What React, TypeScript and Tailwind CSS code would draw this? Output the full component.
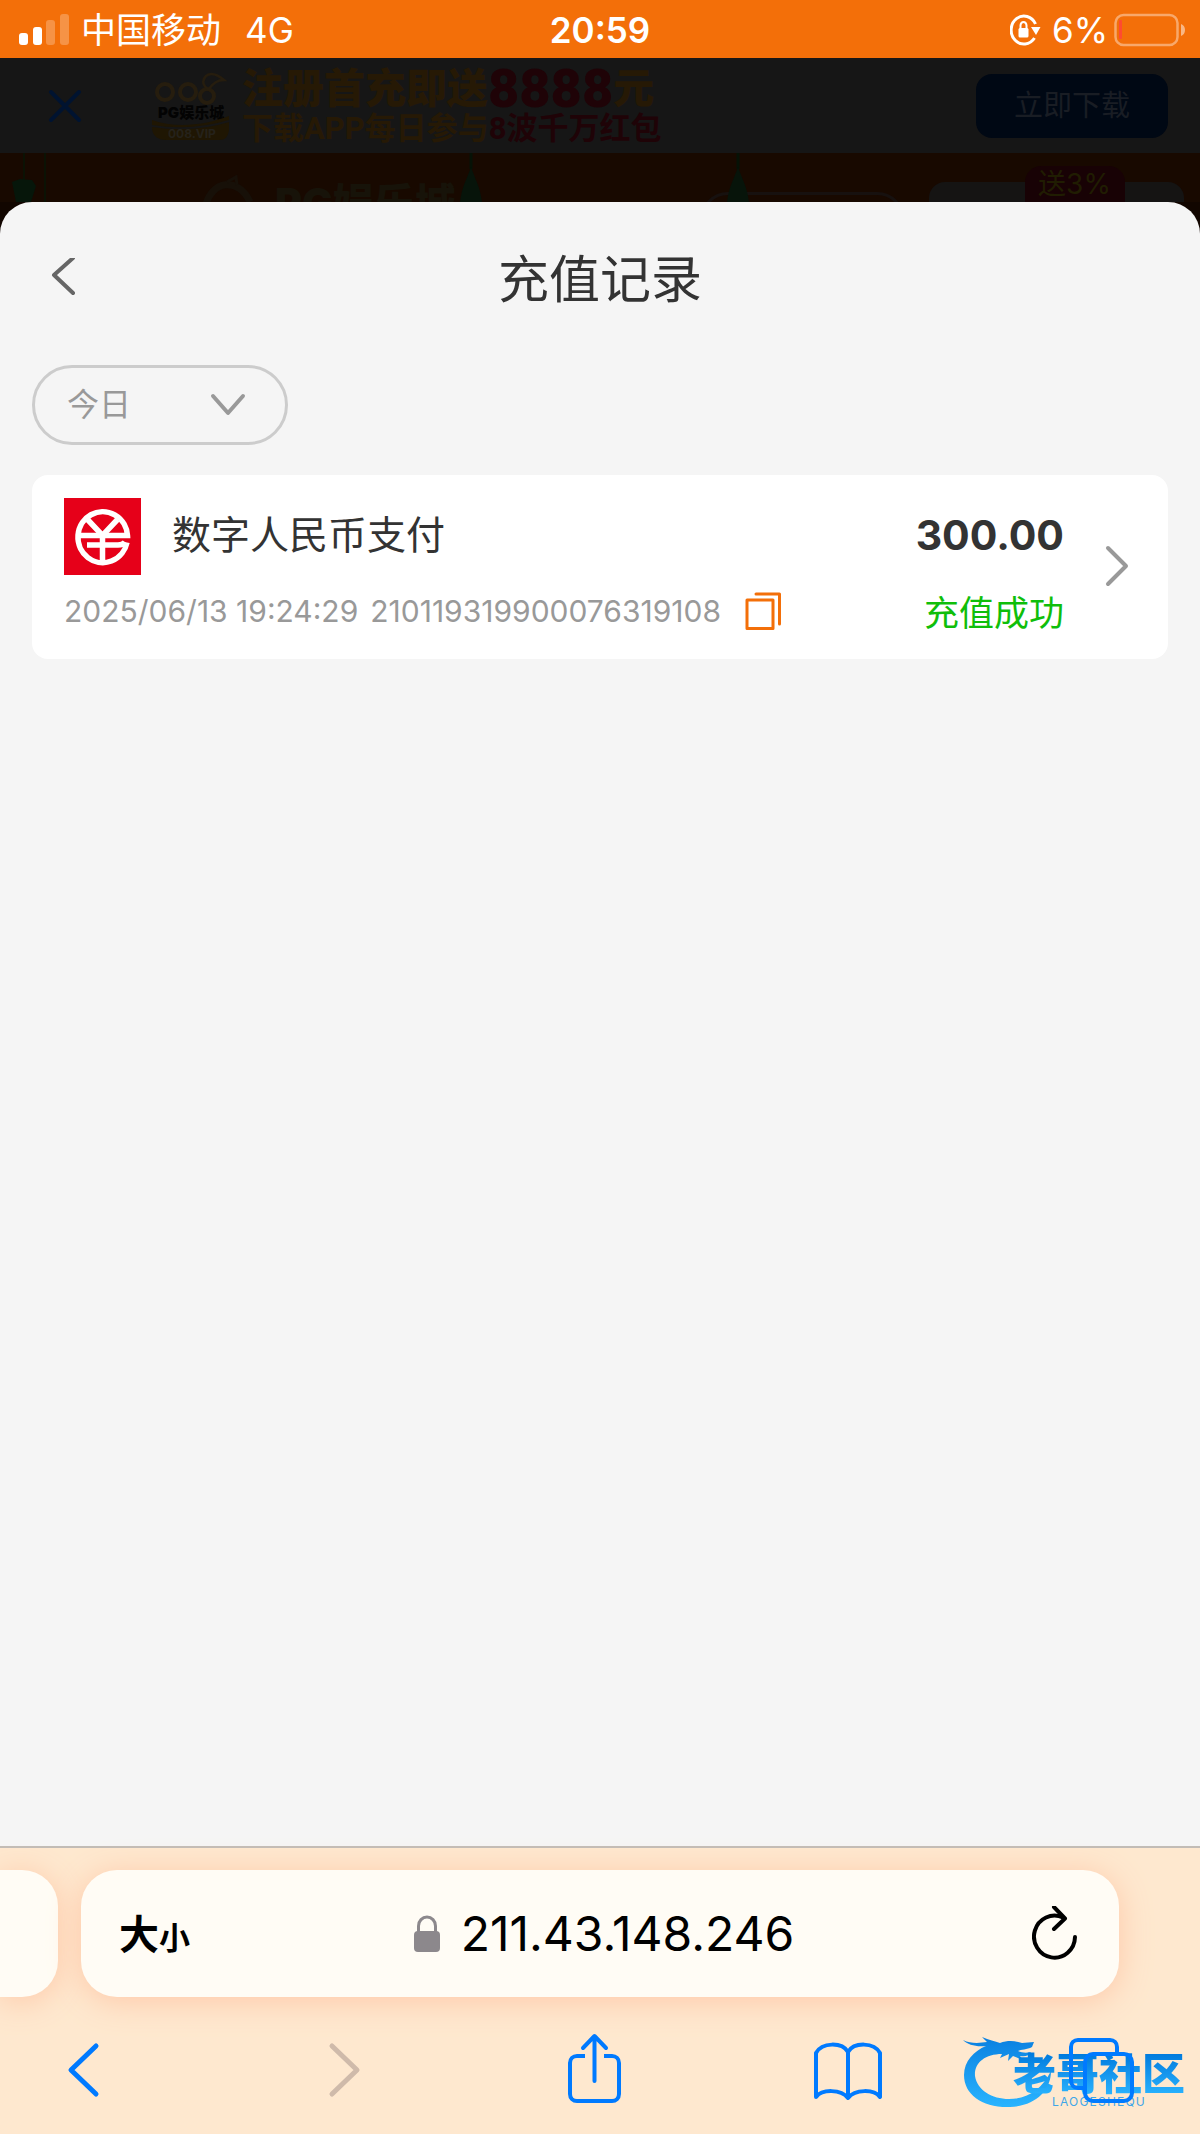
import { useState } from 'react';

type TransactionRecord = {
  id: string;
  method: string;
  time: string;
  amount: string;
  status: string;
};

const RECORDS: TransactionRecord[] = [
  {
    id: '210119319900076319108',
    method: '数字人民币支付',
    time: '2025/06/13 19:24:29',
    amount: '300.00',
    status: '充值成功',
  },
];

function StatusBar() {
  return (
    <header className="grid h-[58px] grid-cols-[1fr_auto_1fr] items-center bg-[#f36f09] px-[14px] pt-[2px] text-[35px] leading-[40px] text-white">
      <div className="flex items-center gap-3 pl-[5px]">
        <svg width="50" height="32" viewBox="0 0 50 32" fill="#fff" aria-hidden="true">
          <rect x="0" y="19" width="9" height="12" rx="3" />
          <rect x="14" y="13" width="9" height="18" rx="3" />
          <rect x="27" y="6" width="9" height="25" rx="3" opacity=".25" />
          <rect x="41" y="0" width="9" height="31" rx="3" opacity=".25" />
        </svg>
        <span>中国移动</span>
        <span className="pl-3">4G</span>
      </div>
      <time className="font-semibold">20:59</time>
      <div className="flex items-center justify-end gap-[6px]">
        <svg width="32" height="32" viewBox="0 0 32 32" fill="none" aria-hidden="true">
          <path d="M24.500 24A12.800 14 0 1 1 25.500 10" stroke="#fff" strokeWidth="3" />
          <path d="M21 13h9.500l-4.500 8z" fill="#fff" />
          <rect x="8.500" y="14" width="10" height="9.500" rx="1.500" fill="#fff" />
          <path d="M10.500 15v-3.500a3 3.500 0 0 1 6 0V15" stroke="#fff" strokeWidth="2" />
        </svg>
        <span className="pl-1">6%</span>
        <svg width="72" height="34" viewBox="0 0 72 34" fill="none" aria-hidden="true">
          <rect x="1.500" y="2" width="62" height="30" rx="8" stroke="#fff" strokeOpacity=".4" strokeWidth="2.500" />
          <rect x="5" y="7" width="3" height="19" rx="1" fill="#ff4b30" />
          <path d="M67 11q4 1.500 4 6t-4 6z" fill="#fff" fillOpacity=".5" />
        </svg>
      </div>
    </header>
  );
}

function BrandLogo() {
  return (
    <svg width="78" height="72" viewBox="0 0 78 72" fill="none" aria-hidden="true">
      <g stroke="#261d0e" strokeWidth="4">
        <circle cx="13" cy="22" r="8" />
        <circle cx="36" cy="22" r="8" />
        <circle cx="55" cy="26" r="7" />
        <path d="M59 21c-8-4-10-10-5-15 5-4 12-1 18 4-5 0-11 3-15 9" strokeWidth="2.500" />
      </g>
      <text x="6" y="48" fontSize="15" fontWeight="900" fill="#030303">PG娱乐城</text>
      <path d="M0 50c22 8 51 6 77-4v14c-1 7-4 10-10 10H14C6 70 1 66 0 59z" fill="#1f1603" />
      <path d="M0 56c26 4 51 3 77-5" stroke="#161616" strokeWidth="2" />
      <text x="16" y="68" fontSize="12" fontWeight="700" fill="#25221b">008.VIP</text>
    </svg>
  );
}

function DownloadBanner() {
  return (
    <section className="flex h-[95px] items-center justify-between bg-[#161616] pr-8 pl-12">
      <div className="flex items-center">
        <button type="button" aria-label="关闭" className="mr-[70px]">
          <svg width="34" height="36" viewBox="0 0 34 36" aria-hidden="true">
            <path d="M3 4l28 28M31 4L3 32" stroke="#001330" strokeWidth="4" strokeLinecap="round" />
          </svg>
        </button>
        <BrandLogo />
        <div className="ml-3 font-[Roboto,'Noto_Sans_CJK_SC',sans-serif] font-black whitespace-nowrap text-[#261905]">
          <p className="flex items-center text-[41px] leading-[46px]">
            注册首充即送<span className="text-[54px] text-[#1f0307]">8888</span>元
          </p>
          <p className="text-[31px] leading-[34px] font-bold">
            下载APP每日参与<span className="text-[#1f0307]">8波千万红包</span>
          </p>
        </div>
      </div>
      <button type="button" className="h-16 w-48 rounded-2xl bg-[#000814] text-[29px] leading-[40px] text-[#191d24]">
        立即下载
      </button>
    </section>
  );
}

function Tassel() {
  return (
    <svg width="30" height="49" viewBox="0 0 30 49" aria-hidden="true">
      <path d="M15 0v16" stroke="#061206" strokeWidth="3" />
      <path d="M15 14C11 26 6 33 4 49h22C24 33 19 26 15 14z" fill="#07140a" />
    </svg>
  );
}

// Top edge of the casino lobby that peeks out above the sheet
function LobbyStrip() {
  return (
    <section className="flex h-[49px] items-start justify-between overflow-hidden bg-[#180900] pr-4 pl-[9px]">
      <div className="flex items-start">
        <svg width="38" height="49" viewBox="0 0 38 49" aria-hidden="true">
          <path d="M15 0v28M36 0v49" stroke="#0b1204" strokeWidth="2" />
          <path d="M3 29l8-3 12 1 4 6-5 16H7z" fill="#06160a" />
        </svg>
        <svg width="60" height="49" viewBox="0 0 60 49" className="ml-[152px]" fill="none" aria-hidden="true">
          <path d="M6 55C12 26 40 24 51 49" stroke="#171008" strokeWidth="7" />
          <path d="M28 29l9-5 1 8" stroke="#171008" strokeWidth="3" />
        </svg>
        <span className="ml-4 pt-6 text-[41px] leading-[52px] font-black text-[#171309]">PG娱乐城</span>
        <Tassel />
      </div>
      <div className="flex items-start gap-6">
        <div className="relative mt-[39px] h-14 w-[205px] rounded-full border-3 border-[#17110f]">
          <div className="absolute -top-[42px] left-5">
            <Tassel />
          </div>
        </div>
        <div className="mt-[29px] flex h-14 w-[255px] justify-center rounded-2xl bg-[#151413] pl-9">
          <span className="-mt-4 h-14 w-[100px] rounded-t-2xl bg-[#180205] text-center text-[28px] leading-[36px] text-[#201d02]">
            送3%
          </span>
        </div>
      </div>
    </section>
  );
}

function YuanLogo() {
  return (
    <svg width="77" height="77" viewBox="0 0 77 77" fill="none" aria-hidden="true">
      <rect width="77" height="77" fill="#e60019" />
      <g stroke="#fff" strokeWidth="5.500">
        <path d="M63 44.500A24.800 25.500 0 1 1 63.500 37.500H14" />
        <path d="M23.500 21.500L38.500 37.500L53.500 21.500M38.500 36v29" />
        <path d="M23 47h31M54 47q5 0 7-3" />
      </g>
    </svg>
  );
}

function RecordCard({ record }: { record: TransactionRecord }) {
  return (
    <li className="flex h-[184px] items-center justify-between rounded-2xl bg-white pr-[38px] pb-[2px] pl-8">
      <div className="flex flex-col gap-3">
        <div className="flex items-center gap-[31px]">
          <YuanLogo />
          <h2 className="pb-[2px] text-[39px] leading-[48px] text-[#333]">{record.method}</h2>
        </div>
        <div className="flex items-center text-[30px] leading-[48px] whitespace-nowrap text-[#999]">
          <time>{record.time}</time>
          <span className="ml-3">{record.id}</span>
          <button type="button" aria-label="复制订单号" className="ml-6">
            <svg width="36" height="38" viewBox="0 0 36 38" fill="none" stroke="#f36f09" strokeWidth="3" strokeLinejoin="round" aria-hidden="true">
              <rect x="2" y="8" width="26" height="28.500" />
              <path d="M11 2h23.500v30" strokeLinecap="round" />
            </svg>
          </button>
        </div>
      </div>
      <div className="flex items-center gap-10">
        <div className="flex flex-col items-end gap-[22px] pt-4">
          <strong className="text-[41px] leading-[56px] font-bold text-[#333]">{record.amount}</strong>
          <span className="text-[35px] leading-[56px] text-[#0fbe0a]">{record.status}</span>
        </div>
        <svg width="26" height="44" viewBox="0 0 26 44" fill="none" aria-hidden="true">
          <path d="M4 4l18 18L4 40" stroke="#999" strokeWidth="4" strokeLinecap="round" strokeLinejoin="round" />
        </svg>
      </div>
    </li>
  );
}

function RecordSheet() {
  const [range, setRange] = useState('今日');

  return (
    <main className="flex-1 rounded-t-[32px] bg-[#f5f5f5] px-8">
      <div className="grid h-[155px] grid-cols-[1fr_auto_1fr] items-center">
        <button type="button" aria-label="返回" className="justify-self-start pl-[18px]">
          <svg width="28" height="44" viewBox="0 0 28 44" fill="none" aria-hidden="true">
            <path d="M23 0L4 17l19 18" stroke="#666" strokeWidth="4" strokeLinecap="round" strokeLinejoin="round" />
          </svg>
        </button>
        <h1 className="text-[51px] leading-[64px] text-[#333]">充值记录</h1>
      </div>

      <div className="relative mt-2 w-64">
        <label htmlFor="range" className="sr-only">日期范围</label>
        <select
          id="range"
          value={range}
          onChange={(e) => setRange(e.target.value)}
          className="block h-20 w-full appearance-none rounded-full border-3 border-[#ccc] bg-transparent pl-8 text-[32px] leading-[40px] text-[#999]"
        >
          <option>今日</option>
          <option>昨日</option>
          <option>近7日</option>
          <option>近30日</option>
        </select>
        <svg width="36" height="24" viewBox="0 0 36 24" fill="none" className="pointer-events-none absolute top-7 right-[42px]" aria-hidden="true">
          <path d="M3 3l15 17L33 3" stroke="#999" strokeWidth="4" strokeLinecap="round" strokeLinejoin="round" />
        </svg>
      </div>

      <ul className="mt-[30px] space-y-4">
        {RECORDS.map((r) => (
          <RecordCard key={r.id} record={r} />
        ))}
      </ul>
    </main>
  );
}

function AddressBar() {
  return (
    <div className="flex h-[127px] gap-[23px] pr-[81px]">
      <div className="w-[58px] rounded-r-[36px] bg-[#fffcf5] shadow-[0_4px_32px_#ffc8a8]" />
      <div className="grid flex-1 grid-cols-[1fr_auto_1fr] items-center rounded-[36px] bg-[#fffcf5] pr-[41px] pl-[38px] shadow-[0_4px_32px_#ffc8a8]">
        <button type="button" aria-label="页面设置" className="flex items-baseline justify-self-start pt-[6px] font-bold text-black">
          <span className="text-[40px] leading-[56px]">大</span>
          <span className="text-[31px] leading-[56px]">小</span>
        </button>
        <div className="flex items-center gap-5 pl-[10px]">
          <svg width="28" height="38" viewBox="0 0 28 38" fill="none" aria-hidden="true">
            <rect x="1" y="16" width="26" height="21" rx="4" fill="#8c888c" />
            <path d="M5.500 18v-7a8.500 9 0 0 1 17 0v7" stroke="#8c888c" strokeWidth="3" />
          </svg>
          <label htmlFor="address" className="sr-only">网址</label>
          <input
            id="address"
            type="text"
            defaultValue="211.43.148.246"
            className="field-sizing-content bg-transparent text-[48px] leading-[64px] text-black"
          />
        </div>
        <button type="button" aria-label="重新载入" className="justify-self-end">
          <svg width="46" height="56" viewBox="0 0 46 56" fill="none" stroke="#000" strokeWidth="4" strokeLinecap="round" strokeLinejoin="round" aria-hidden="true">
            <path d="M43 31a20.500 21 0 1 1-12-19.500" />
            <path d="M22 1l11 11.500L22 23" />
          </svg>
        </button>
      </div>
    </div>
  );
}

function Toolbar() {
  return (
    <nav className="flex h-[137px] items-center justify-between pt-1 pr-[63px] pl-12">
      <button type="button" aria-label="后退">
        <svg width="72" height="72" viewBox="0 0 72 72" fill="none" aria-hidden="true">
          <path d="M48 14L23 38l25 24" stroke="#007aff" strokeWidth="5" strokeLinecap="round" strokeLinejoin="round" />
        </svg>
      </button>
      <button type="button" aria-label="前进" disabled>
        <svg width="72" height="72" viewBox="0 0 72 72" fill="none" aria-hidden="true">
          <path d="M30 14l25 24-25 24" stroke="#cfbaaa" strokeWidth="5" strokeLinecap="round" strokeLinejoin="round" />
        </svg>
      </button>
      <button type="button" aria-label="分享">
        <svg width="72" height="72" viewBox="0 0 72 72" fill="none" stroke="#007aff" strokeWidth="4" aria-hidden="true">
          <path d="M28 24h-8c-4 0-7 3-7 7v31c0 4 3 7 7 7h35c4 0 7-3 7-7V31c0-4-3-7-7-7h-8" />
          <path d="M37.500 49V5M26 16L37.500 4 49 16" strokeLinecap="round" strokeLinejoin="round" />
        </svg>
      </button>
      <button type="button" aria-label="书签">
        <svg width="72" height="72" viewBox="0 0 72 72" fill="none" stroke="#007aff" strokeWidth="4" strokeLinejoin="round" aria-hidden="true">
          <path d="M37 20c-6-10-26-10-32 1v44c6-8 25-8 32 1 7-9 26-9 32-1V21c-6-11-26-11-32-1z" />
          <path d="M37 20v46" />
        </svg>
      </button>
      <div className="relative">
        <Watermark />
        <button type="button" aria-label="标签页" className="relative block">
          <svg width="72" height="72" viewBox="0 0 72 72" fill="none" stroke="#007aff" strokeWidth="4" aria-hidden="true">
            <rect x="20" y="22" width="47" height="47" rx="8" />
            <path d="M52 21v-6c0-4-3-7-7-7H13c-4 0-7 3-7 7v33c0 5 3 8 7 8h6" />
          </svg>
        </button>
      </div>
    </nav>
  );
}

function Watermark() {
  return (
    <div className="pointer-events-none absolute top-0 -right-12 h-20 w-[222px]">
      <svg width="92" height="80" viewBox="0 0 92 80" fill="none" aria-hidden="true">
        <defs>
          <linearGradient id="dragon" x1="0" y1="0" x2="0" y2="1">
            <stop offset="0" stopColor="#0a80e0" />
            <stop offset="1" stopColor="#29b4ff" />
          </linearGradient>
        </defs>
        <path
          d="M0 8c8 4 17 3 24 2l-5-5c7 3 13 4 18 6 8-3 16-2 22 0l12-1-2 5c-5 3-11 2-14 4 4 2 9 2 13 1-2 4-6 5-11 4l3 4-10-4-5 5 1-7-9 4 2-4C22 22 11 31 12 44c2 14 17 23 34 23 17 0 32-8 42-28 0 20-16 35-41 36C20 76 1 63 1 43 1 29 11 19 23 14 13 15 5 13 0 8z"
          fill="url(#dragon)"
        />
      </svg>
      <div className="absolute top-5 right-0 flex flex-col items-center">
        <span className="bg-linear-to-b from-[#0078dc] to-[#2ab4ff] bg-clip-text text-[43px] leading-[44px] font-black whitespace-nowrap text-transparent">
          老哥社区
        </span>
        <span className="text-[12px] leading-[12px] tracking-widest text-[#3fa6e8]">LAOGESHEQU</span>
      </div>
    </div>
  );
}

export default function App() {
  return (
    <div className="flex min-h-screen flex-col overflow-hidden bg-[#120600] font-[Inter,'Noto_Sans_CJK_SC',sans-serif]">
      <StatusBar />
      <DownloadBanner />
      <LobbyStrip />
      <RecordSheet />
      <footer className="border-t-2 border-[#c2bcb6] bg-[#fee8cf] pt-[22px]">
        <AddressBar />
        <Toolbar />
      </footer>
    </div>
  );
}
